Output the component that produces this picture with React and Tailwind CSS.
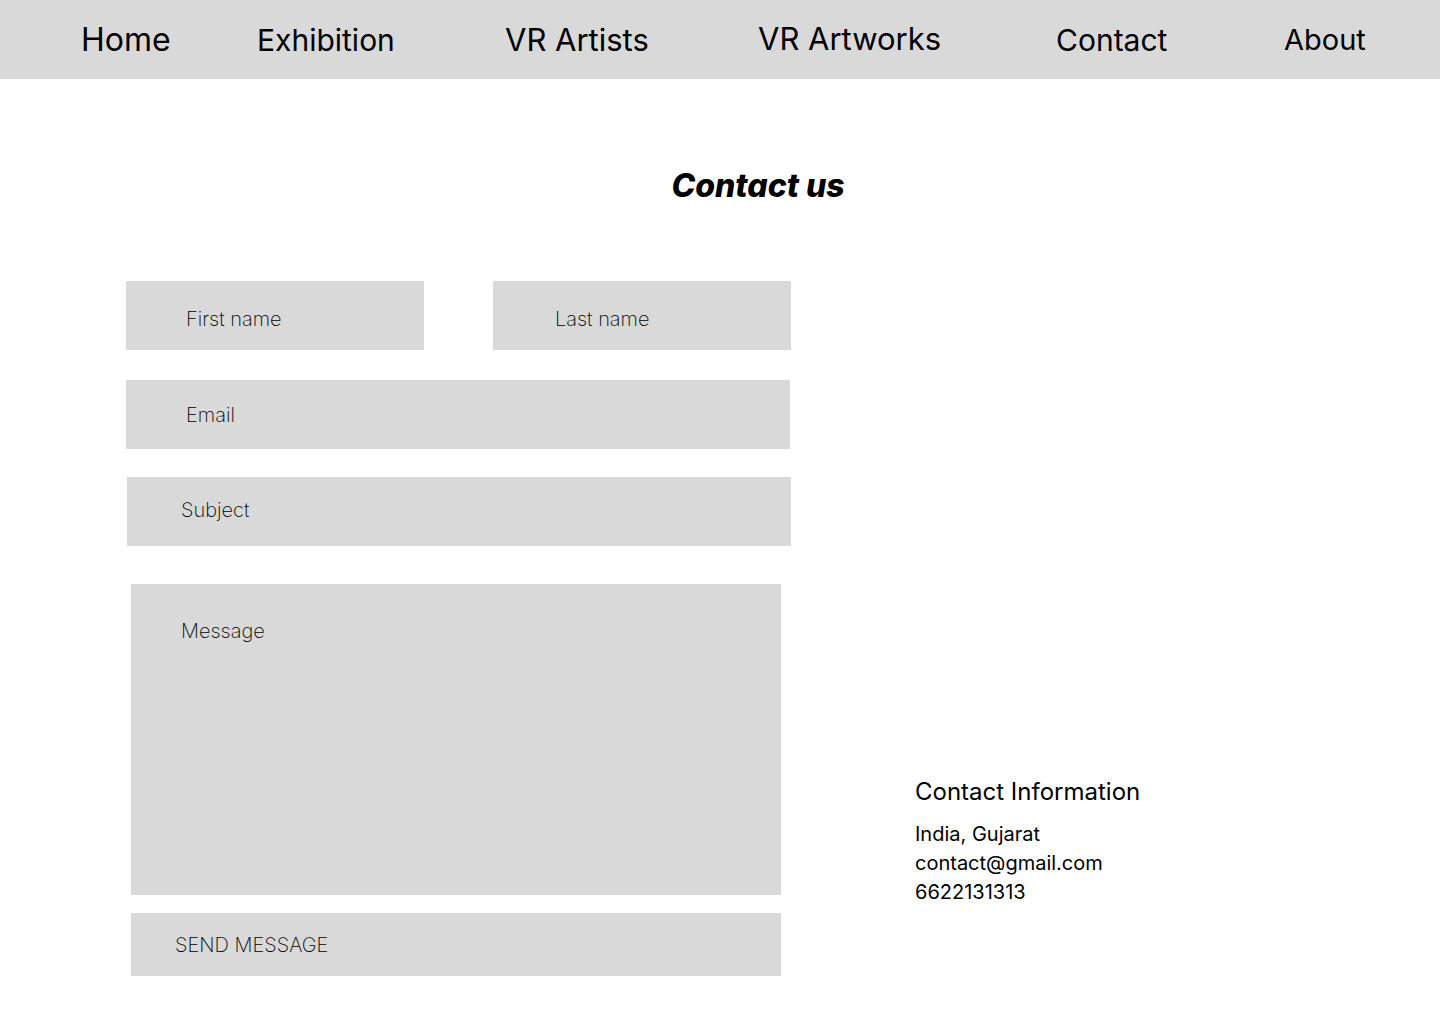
const field =
  "block w-full bg-[#d9d9d9] text-xl font-extralight text-black outline-offset-2 placeholder:text-black placeholder:opacity-100";

const links = [
  { label: "Home", style: "text-[32px]" },
  { label: "Exhibition", style: "text-[30px]" },
  { label: "VR Artists", style: "text-[31px]" },
  { label: "VR Artworks", style: "pb-0.5 text-[31px]" },
  { label: "Contact", style: "text-[30px]" },
  { label: "About", style: "text-[29px]" },
];

function Field({ id, label, type = "text", className = "pl-[60px]" }) {
  return (
    <input
      id={id}
      name={id}
      type={type}
      aria-label={label}
      placeholder={label}
      className={`${field} h-[69px] ${className}`}
    />
  );
}

export default function App() {
  return (
    <div className="min-h-screen bg-white font-['Inter',sans-serif] text-black">
      <nav
        className="grid h-[79px] grid-cols-[176fr_248fr_253fr_298fr_228fr_156fr] items-center bg-[#d9d9d9] pl-[81px]"
        aria-label="Main"
      >
        {links.map((l) => (
          <div key={l.label} className={`leading-10 whitespace-nowrap ${l.style}`}>
            <a href="#">{l.label}</a>
          </div>
        ))}
      </nav>
      <main className="pb-12">
        <h1 className="ml-[76px] pt-[87px] text-center text-[32px] leading-10 font-extrabold italic">Contact us</h1>
        <div className="grid grid-cols-[665fr_649fr] items-end pt-[75px] pl-[126px]">
          <form>
            <div className="grid grid-cols-2 gap-[69px]">
              <Field id="first-name" label="First name" className="pt-1.5 pl-[60px]" />
              <Field id="last-name" label="Last name" className="pt-1.5 pl-[62px]" />
            </div>
            <div className="mt-[30px] pr-px">
              <Field id="email" label="Email" type="email" />
            </div>
            <div className="mt-7 pl-px">
              <Field id="subject" label="Subject" className="pb-1 pl-[54px]" />
            </div>
            <div className="mt-[38px] mr-[10px] ml-[5px]">
              <textarea
                id="message"
                name="message"
                aria-label="Message"
                placeholder="Message"
                className={`${field} h-[311px] resize-none pt-[33px] pl-[50px]`}
              />
              <button type="button" className={`${field} mt-[18px] h-[63px] pl-11 text-left`}>
                SEND MESSAGE
              </button>
            </div>
          </form>
          <address className="mb-[69px] ml-[124px] text-xl leading-[29px] not-italic">
            <h2 className="mb-3.5 text-2xl leading-[29px]">Contact Information</h2>
            <p>India, Gujarat</p>
            <p>
              <a href="mailto:contact@gmail.com">contact@gmail.com</a>
            </p>
            <p>
              <a href="tel:6622131313">6622131313</a>
            </p>
          </address>
        </div>
      </main>
    </div>
  );
}
